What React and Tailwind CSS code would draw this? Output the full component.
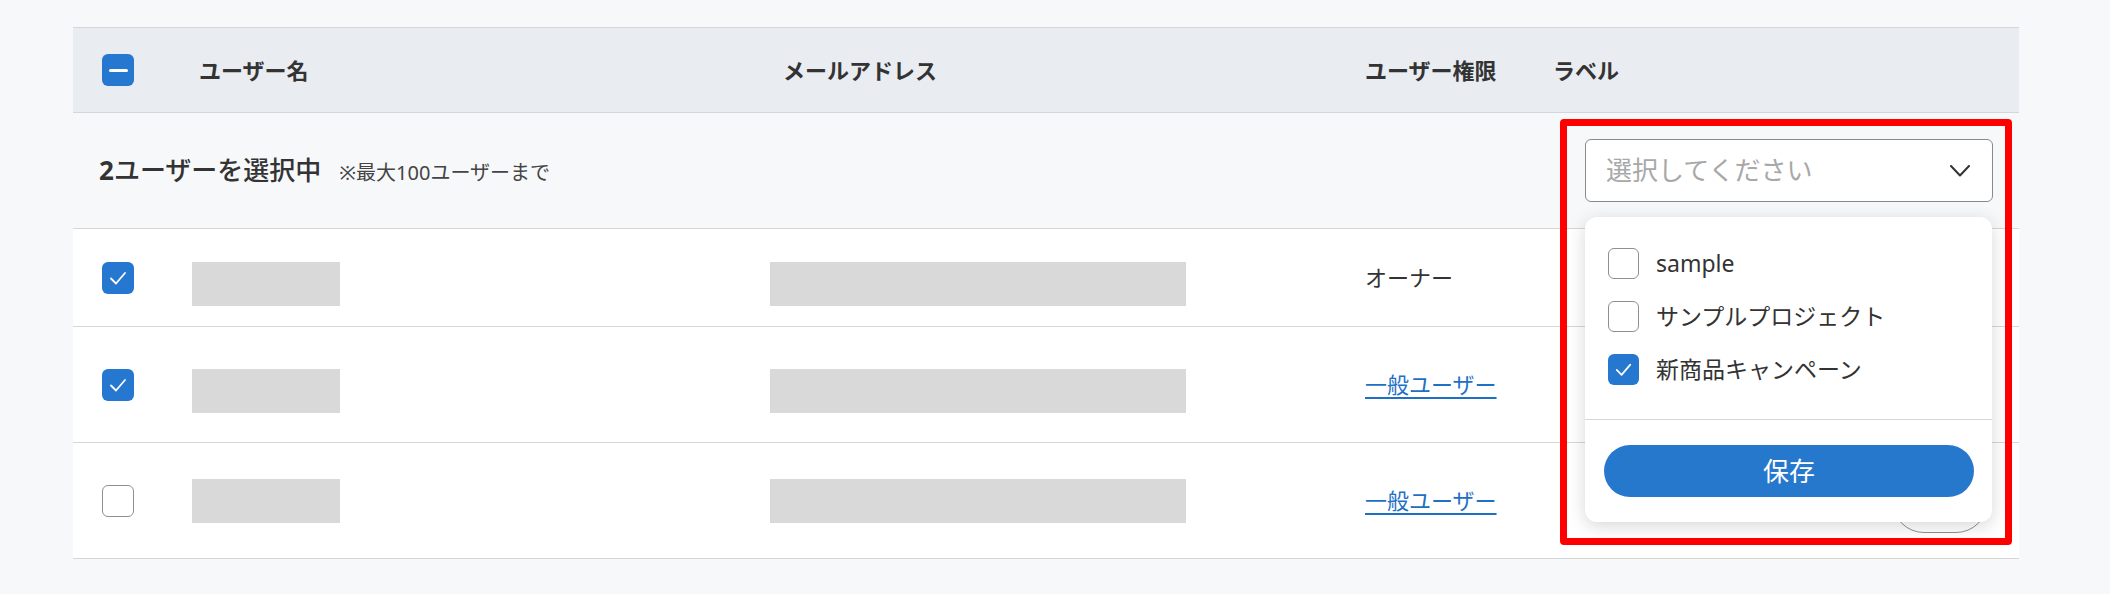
import React from 'react';

const FONT = { fontFamily: '"Noto Sans", "Noto Sans CJK JP", sans-serif' };

const rows = [
    { id: 1, checked: true, role: 'オーナー', link: false, h: 'h-[98px]', shift: true },
    { id: 2, checked: true, role: '一般ユーザー', link: true, h: 'h-[116px]', shift: true },
    { id: 3, checked: false, role: '一般ユーザー', link: true, h: 'h-[116px]', shift: false, pill: true },
];

const labels = [
    { name: 'sample', checked: false },
    { name: 'サンプルプロジェクト', checked: false },
    { name: '新商品キャンペーン', checked: true },
];

const Box = ({ checked, size = 'w-[32px] h-[32px]' }) => (
    checked ? (
        <span className={`${size} shrink-0 rounded-[6px] bg-[#2577cf] flex items-center justify-center`}>
            <svg viewBox="0 0 32 32" className="w-full h-full">
                <polyline points="9,16.5 14,21.5 23,11" fill="none" stroke="#fff" strokeWidth="1.8" strokeLinecap="round" strokeLinejoin="round" />
            </svg>
        </span>
    ) : (
        <span className={`${size} block shrink-0 rounded-[6px] border border-[#8f8f8f] bg-white`} />
    )
);

const App = () => {
    return (
        <div className="relative min-h-screen w-full bg-[#f7f8fa] pt-[27px] pl-[73px] pr-[91px] text-[#333]" style={FONT}>
            {/* header */}
            <div className="h-[86px] flex items-center bg-[#e9ecf1] border-y border-[#d3d6db] text-[22px] font-bold">
                <div className="w-[119px] pl-[29px]">
                    <span className="w-[32px] h-[32px] rounded-[6px] bg-[#2577cf] flex items-center justify-center">
                        <span className="w-[19px] h-[3px] bg-white rounded-full" />
                    </span>
                </div>
                <div className="w-[578px] pl-[7px]">ユーザー名</div>
                <div className="w-[595px] pl-[13px]">メールアドレス</div>
                <div className="w-[188px]">ユーザー権限</div>
                <div className="flex-1">ラベル</div>
            </div>

            {/* selection bar */}
            <div className="relative h-[116px] flex items-center border-b border-[#d6d6d6] pl-[26px] pr-[26px]">
                <div className="flex items-baseline">
                    <span className="text-[26px] font-bold">2</span>
                    <span className="text-[26px] font-medium">ユーザーを選択中</span>
                    <span className="ml-[18px] text-[20px] text-[#444]">※最大100ユーザーまで</span>
                </div>
                <div className="ml-auto w-[408px] h-[63px] rounded-[6px] border border-[#8a8a8a] bg-white flex items-center pl-[20px] pr-[22px]">
                    <span className="text-[26px] text-[#a8a8a8]">選択してください</span>
                    <svg viewBox="0 0 20 12" className="ml-auto w-[20px] h-[12px]">
                        <polyline points="1,1 10,10.5 19,1" fill="none" stroke="#333" strokeWidth="2" strokeLinecap="round" strokeLinejoin="round" />
                    </svg>
                </div>

                {/* dropdown */}
                <div className="absolute z-10 right-[27px] top-[104px] w-[407px] rounded-[12px] bg-white shadow-[0_4px_18px_rgba(0,0,0,0.16)]">
                    <div className="pt-[20px] pb-[23px] pl-[23px]">
                        {labels.map((l) => (
                            <div key={l.name} className="h-[53px] flex items-center gap-[17px]">
                                <Box checked={l.checked} size="w-[31px] h-[31px]" />
                                <span className="text-[23px] text-[#333]">{l.name}</span>
                            </div>
                        ))}
                    </div>
                    <div className="border-t border-[#d6d6d6] pt-[25px] pb-[25px] pl-[19px] pr-[18px]">
                        <button className="w-full h-[52px] rounded-full bg-[#2678cd] text-white text-[26px] flex items-center justify-center">
                            保存
                        </button>
                    </div>
                </div>
            </div>

            {/* rows */}
            {rows.map((r) => (
                <div key={r.id} className={`${r.h} flex items-center bg-white border-b border-[#d6d6d6] text-[22px]`}>
                    <div className="w-[119px] pl-[29px]">
                        <Box checked={r.checked} />
                    </div>
                    <div className="w-[578px]">
                        <div className={`w-[148px] h-[44px] bg-[#d9d9d9] ${r.shift ? 'mt-[12px]' : ''}`} />
                    </div>
                    <div className="w-[595px]">
                        <div className={`w-[416px] h-[44px] bg-[#d9d9d9] ${r.shift ? 'mt-[12px]' : ''}`} />
                    </div>
                    <div className="w-[188px]">
                        {r.link ? (
                            <a href="#" className="text-[#1f6fc5] underline underline-offset-[4px] decoration-2">{r.role}</a>
                        ) : (
                            <span>{r.role}</span>
                        )}
                    </div>
                    <div className="flex-1 flex justify-end pr-[31px]">
                        {r.pill && <span className="w-[96px] h-[64px] rounded-full border border-[#8f8f8f] bg-white" />}
                    </div>
                </div>
            ))}

            {/* annotation */}
            <div className="absolute z-20 left-[1560px] top-[119px] w-[452px] h-[426px] border-[7px] border-[#ff0000] rounded-[4px] pointer-events-none" />
        </div>
    );
};

export default App;
